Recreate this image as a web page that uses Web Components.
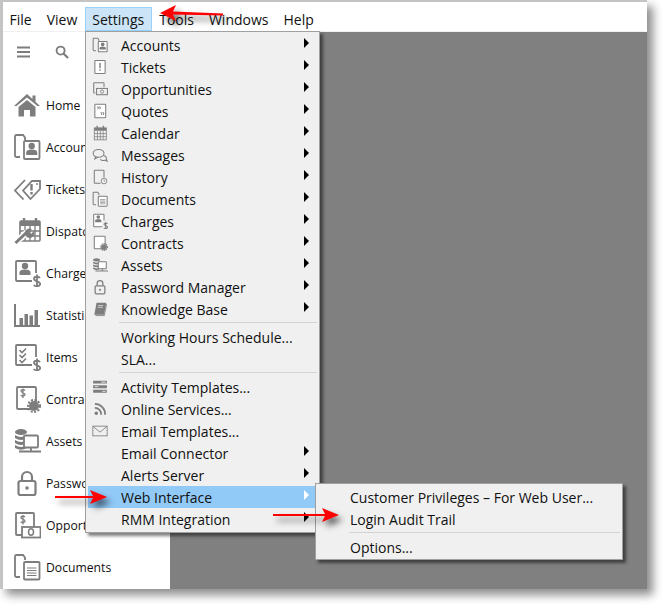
<!DOCTYPE html>
<html>
<head>
<meta charset="utf-8">
<title>Settings menu</title>
<style>
  html, body { margin: 0; background: #fff; }
  body { width: 663px; height: 605px; overflow: hidden; font-family: "Open Sans", "Noto Sans", sans-serif; }
</style>
</head>
<body>

<app-window>
  <menu-bar slot="bar">
    <bar-item>File</bar-item>
    <bar-item>View</bar-item>
    <bar-item active>Settings</bar-item>
    <bar-item>Tools</bar-item>
    <bar-item>Windows</bar-item>
    <bar-item>Help</bar-item>
  </menu-bar>

  <side-nav slot="side">
    <side-item icon="home">Home</side-item>
    <side-item icon="accounts">Accounts</side-item>
    <side-item icon="tag">Tickets</side-item>
    <side-item icon="dispatch">Dispatch</side-item>
    <side-item icon="charges">Charges</side-item>
    <side-item icon="stats">Statistics</side-item>
    <side-item icon="items">Items</side-item>
    <side-item icon="contracts">Contracts</side-item>
    <side-item icon="assets">Assets</side-item>
    <side-item icon="lock">Passwords</side-item>
    <side-item icon="opportunity">Opportunities</side-item>
    <side-item icon="documents">Documents</side-item>
  </side-nav>

  <pop-menu slot="over" style="left:85px;top:31px;width:229px">
    <menu-entry icon="accounts" more>Accounts</menu-entry>
    <menu-entry icon="ticket" more>Tickets</menu-entry>
    <menu-entry icon="bill" more>Opportunities</menu-entry>
    <menu-entry icon="quotes" more>Quotes</menu-entry>
    <menu-entry icon="calendar" more>Calendar</menu-entry>
    <menu-entry icon="messages" more>Messages</menu-entry>
    <menu-entry icon="history" more>History</menu-entry>
    <menu-entry icon="documents" more>Documents</menu-entry>
    <menu-entry icon="chargesmini" more>Charges</menu-entry>
    <menu-entry icon="contractmini" more>Contracts</menu-entry>
    <menu-entry icon="assets" more>Assets</menu-entry>
    <menu-entry icon="lock" more>Password Manager</menu-entry>
    <menu-entry icon="book" more>Knowledge Base</menu-entry>
    <menu-line></menu-line>
    <menu-entry>Working Hours Schedule...</menu-entry>
    <menu-entry>SLA...</menu-entry>
    <menu-line></menu-line>
    <menu-entry icon="activity">Activity Templates...</menu-entry>
    <menu-entry icon="rss">Online Services...</menu-entry>
    <menu-entry icon="mail">Email Templates...</menu-entry>
    <menu-entry more>Email Connector</menu-entry>
    <menu-entry more>Alerts Server</menu-entry>
    <menu-entry more selected>Web Interface</menu-entry>
    <menu-entry more>RMM Integration</menu-entry>
  </pop-menu>

  <pop-menu slot="over" style="left:315px;top:483px;width:302px;padding-bottom:1px">
    <menu-entry sub>Customer Privileges – For Web User...</menu-entry>
    <menu-entry sub>Login Audit Trail</menu-entry>
    <menu-line></menu-line>
    <menu-entry sub>Options...</menu-entry>
  </pop-menu>

  <red-arrow slot="over" dir="left" style="left:157px;top:2px;width:70px"></red-arrow>
  <red-arrow slot="over" style="left:52px;top:487px;width:58px"></red-arrow>
  <red-arrow slot="over" style="left:270px;top:505px;width:72px"></red-arrow>
</app-window>

<script>
  // icon shapes, all on a 28 x 28 box, drawn in currentColor
  const folderBack = '<path d="M7 24H3.500A1.500 1.500 0 0 1 2 22.500V3.500A1.500 1.500 0 0 1 3.500 2H10l2 2.500V7" fill="none" stroke="currentColor" stroke-width="1.800"/>'
  const dollar = '<path d="M27 19c-1-1.600-6-2-6 .8c0 3 6.200 2 6.200 5.200c0 2.800-5 2.600-6.500 1M24 15.500V29" fill="none" stroke="currentColor" stroke-width="1.800"/>'
  const gear = '<circle cx="21" cy="21" r="5" fill="currentColor"/><circle cx="21" cy="21" r="6" fill="none" stroke="currentColor" stroke-width="2" stroke-dasharray="2 1.500"/>'
  const bang = (x, y1, y2, d) => `<path d="M${x} ${y1}V${y2}M${x} ${d}V${d + 2.500}" stroke="currentColor" stroke-width="2.400" fill="none"/>`
  const person = (x, y) => `<circle cx="${x}" cy="${y}" r="3.200" fill="currentColor"/><path d="M${x - 5.500} ${y + 9}v-2.500q0-3 5.500-3q5.500 0 5.500 3v2.500z" fill="currentColor"/>`
  const card = (x, y, w, h) => `<rect x="${x}" y="${y}" width="${w}" height="${h}" rx="1" fill="#fff" stroke="currentColor" stroke-width="1.800"/>`
  const lines = (x, y, w, n, gap) => { let d = ''; for (let i = 0; i < n; i++) d += `M${x} ${y + i * gap}h${w}`; return `<path d="${d}" stroke="currentColor" stroke-width="1.200" fill="none"/>` }

  const ICONS = {
    home: '<path d="M14 3L1 15h2.500L14 6.500L24.500 15H27l-4.500-4.200V4.500h-3v3.500z" fill="currentColor"/><path d="M5.500 16L14 9l8.500 7v9.500H17V19h-6v6.500H5.500z" fill="currentColor"/>',
    accounts: folderBack + card(11, 8, 15.500, 18) + person(18.700, 13),
    documents: folderBack + card(11, 9, 15.500, 17.500) + lines(14, 15, 9.500, 4, 2.500),
    tag: '<path d="M10 15.500L19 6h8v8l-9.500 10z" fill="none" stroke="currentColor" stroke-width="1.800"/><path d="M12 5L2 15.500l8.500 9" fill="none" stroke="currentColor" stroke-width="1.800"/>' + bang(18.500, 9, 15.500, 17) + '<circle cx="24" cy="9" r="1" fill="currentColor"/>',
    ticket: card(5, 2.500, 18, 23) + bang(14, 7, 16, 18),
    dispatch: '<rect x="7" y="4" width="20" height="20" rx="1" fill="none" stroke="currentColor" stroke-width="1.600"/><rect x="7" y="4" width="20" height="5" fill="currentColor"/><path d="M7 14h20M7 19h20M12 9v15M17 9v15M22 9v15" stroke="currentColor" stroke-width="1.300"/><path d="M11 1v5M23 1v5" stroke="currentColor" stroke-width="2.400"/><path d="M2 26.500L14 15" stroke="#fff" stroke-width="6"/><path d="M2.500 26L13.500 15.500" stroke="currentColor" stroke-width="3"/><path d="M12 18a5 5 0 0 1 7-6l-3 3l2 2l3-3a5 5 0 0 1-6.500 6.500z" fill="currentColor"/>',
    charges: card(3, 2, 20, 20) + person(12, 7) + '<rect x="19" y="14" width="9" height="15" fill="#fff"/>' + dollar,
    chargesmini: card(3, 2, 18, 22) + person(11, 7) + '<rect x="18" y="13" width="10" height="15" fill="#f0f0f0"/>' + dollar,
    stats: '<path d="M2 3v22h25" fill="none" stroke="currentColor" stroke-width="2"/><rect x="6.500" y="17" width="3.500" height="7" fill="currentColor"/><rect x="11.500" y="13" width="3.500" height="11" fill="currentColor"/><rect x="16.500" y="14.500" width="3.500" height="9.500" fill="currentColor"/><rect x="21.500" y="9" width="3.500" height="15" fill="currentColor"/>',
    items: card(3, 2, 20, 20) + '<path d="M6.500 7l2.500 2.500l4-4M6.500 12l2.500 2.500l4-4M6.500 17l2.500 2.500l4-4" fill="none" stroke="currentColor" stroke-width="1.600"/><rect x="19" y="14" width="9" height="15" fill="#fff"/>' + dollar,
    contracts: card(4, 2, 19, 22) + '<path d="M12 5.500c-.8-1-4-1.300-4 .6c0 2 4 1.300 4 3.400c0 1.800-3.300 1.700-4.300.7M10 3.500V13" fill="none" stroke="currentColor" stroke-width="1.300"/>' + gear,
    contractmini: card(4, 2, 19, 22) + gear,
    assets: '<ellipse cx="8" cy="5" rx="6" ry="3" fill="currentColor"/><path d="M2 8q6 4 12 0v3q-6 4-12 0zM2 13q6 4 12 0v3q-6 4-12 0zM2 18q6 4 12 0v3q-6 3.500-12 0z" fill="currentColor"/><rect x="11" y="8.500" width="14" height="12" rx="1" fill="#fff" stroke="currentColor" stroke-width="1.800"/><path d="M6 24.500h22M18 20v4" stroke="currentColor" stroke-width="1.800"/>',
    lock: '<rect x="5.500" y="12" width="17" height="14" rx="2" fill="none" stroke="currentColor" stroke-width="2.200"/><path d="M9 12V8a5 5 0 0 1 10 0v4" fill="none" stroke="currentColor" stroke-width="2.200"/><circle cx="14" cy="19" r="1.800" fill="currentColor"/>',
    opportunity: card(3, 2, 18, 22) + '<path d="M12 6c-.8-1-4-1.300-4 .6c0 2 4 1.300 4 3.400c0 1.800-3.300 1.700-4.300.7M10 4v9.500" fill="none" stroke="currentColor" stroke-width="1.300"/><rect x="9" y="16" width="18.500" height="10.500" fill="#fff" stroke="currentColor" stroke-width="1.800"/><ellipse cx="18" cy="21" rx="2.500" ry="3.200" fill="none" stroke="currentColor" stroke-width="1.500"/>',
    bill: '<path d="M6 21H4a1 1 0 0 1-1-1V4a1 1 0 0 1 1-1h16a1 1 0 0 1 1 1v7" fill="none" stroke="currentColor" stroke-width="1.800"/><rect x="8" y="13" width="19" height="11" fill="none" stroke="currentColor" stroke-width="1.800"/><circle cx="17.500" cy="18.500" r="2.800" fill="none" stroke="currentColor" stroke-width="1.500"/>',
    quotes: card(5, 2, 19, 24) + '<path d="M9 7h2v2l-1 2M12.500 7h2v2l-1 2M15 17h2v2l-1 2M18.500 17h2v2l-1 2" fill="none" stroke="currentColor" stroke-width="1.700"/>',
    calendar: '<rect x="4" y="5" width="21" height="21" fill="none" stroke="currentColor" stroke-width="1.400"/><rect x="4" y="5" width="21" height="5" fill="currentColor"/><path d="M4 15h21M4 20.500h21M9.500 10v16M14.500 10v16M19.500 10v16" stroke="currentColor" stroke-width="1.300"/><path d="M9 1.500v6M20 1.500v6" stroke="currentColor" stroke-width="2.400"/>',
    messages: '<ellipse cx="11.500" cy="11" rx="9.500" ry="6.800" fill="none" stroke="currentColor" stroke-width="1.800"/><path d="M20 15c4 1 6 3 5 6l1.500 4l-4-2c-3 1-6 .5-8-1.500M6 16.500L5 21l5-3" fill="none" stroke="currentColor" stroke-width="1.800"/>',
    history: '<path d="M15 25H5a1 1 0 0 1-1-1V3a1 1 0 0 1 1-1h15a1 1 0 0 1 1 1v12" fill="none" stroke="currentColor" stroke-width="1.800"/><circle cx="21" cy="21" r="5" fill="none" stroke="currentColor" stroke-width="1.500"/><path d="M21 18.500V21h2" fill="none" stroke="currentColor" stroke-width="1.200"/>',
    book: '<path d="M8 3h17l-4 21H4z" fill="currentColor"/><path d="M6 25.500h15.500l4-20" fill="none" stroke="currentColor" stroke-width="1.500"/><path d="M10.500 8h9M10 11h9" stroke="#f0f0f0" stroke-width="1.200"/>',
    activity: '<path d="M2 3h24v5H2zM2 11h24v5H2zM2 19h24v5H2z" fill="currentColor"/><path d="M16 5.500h8M5 13.500h6M18 21.500h6" stroke="#f0f0f0" stroke-width="1.500"/>',
    rss: '<circle cx="7.500" cy="21.500" r="3" fill="currentColor"/><path d="M5 12a11 11 0 0 1 11 12M5 5a18 18 0 0 1 18 19" fill="none" stroke="currentColor" stroke-width="3"/>',
    mail: '<rect x="1.500" y="5.500" width="25" height="17" fill="none" stroke="currentColor" stroke-width="1.500"/><path d="M2 6l12 10l12-10" fill="none" stroke="currentColor" stroke-width="1.500"/>'
  }

  class AppIcon extends HTMLElement {
    connectedCallback() {
      const size = this.getAttribute('size') || 16
      this.attachShadow({ mode: 'open' })
      this.shadowRoot.innerHTML = `
        <style>
          :host { display: block; flex: none; width: ${size}px; height: ${size}px; color: #7d7d7d; }
          svg { display: block; }
        </style>
        <svg width="${size}" height="${size}" viewBox="0 0 28 28">${ICONS[this.getAttribute('name')] || ''}</svg>`
    }
  }

  class AppWindow extends HTMLElement {
    connectedCallback() {
      this.attachShadow({ mode: 'open' })
      this.shadowRoot.innerHTML = `
        <style>
          :host {
            display: flex;
            flex-direction: column;
            position: relative;
            box-sizing: border-box;
            width: 647px;
            height: 589px;
            border-top: 2px solid #c4c4c4;
            border-left: 3px solid #c4c4c4;
            background: #fff;
            box-shadow: 6px 6px 9px rgba(0, 0, 0, .45);
          }
          .body { display: flex; flex: 1; min-height: 0; border-top: 1px solid #f0f0f0; }
          .work { flex: 1; background: #808080; }
          .over { position: absolute; left: -3px; top: -2px; width: 0; height: 0; }
        </style>
        <slot name="bar"></slot>
        <div class="body">
          <slot name="side"></slot>
          <div class="work"></div>
        </div>
        <div class="over"><slot name="over"></slot></div>`
    }
  }

  class MenuBar extends HTMLElement {
    connectedCallback() {
      this.attachShadow({ mode: 'open' })
      this.shadowRoot.innerHTML = `
        <style>
          :host {
            display: flex;
            align-items: flex-end;
            flex: none;
            height: 29px;
            margin-left: -1px;
            color: #111;
            font: 14px "Open Sans", "Noto Sans", sans-serif;
          }
        </style>
        <slot></slot>`
    }
  }

  class BarItem extends HTMLElement {
    connectedCallback() {
      this.attachShadow({ mode: 'open' })
      this.shadowRoot.innerHTML = `
        <style>
          :host {
            display: block;
            box-sizing: border-box;
            height: 24px;
            line-height: 23px;
            padding: 0 6.500px;
            border: 1px solid transparent;
          }
          :host([active]) { background: #cce4f7; border-color: #99d1ff; }
        </style>
        <slot></slot>`
    }
  }

  class SideNav extends HTMLElement {
    connectedCallback() {
      this.attachShadow({ mode: 'open' })
      this.shadowRoot.innerHTML = `
        <style>
          :host {
            display: block;
            flex: none;
            box-sizing: border-box;
            width: 167px;
            height: 100%;
            overflow: hidden;
            background: #fff;
          }
          .tools { display: flex; align-items: center; gap: 25px; height: 52px; padding: 0 0 13px 14px; box-sizing: border-box; color: #7d7d7d; }
          svg { display: block; }
        </style>
        <div class="tools">
          <svg width="13" height="12" viewBox="0 0 13 12"><path d="M0 1.500h13M0 6h13M0 10.500h13" stroke="currentColor" stroke-width="2"/></svg>
          <svg width="14" height="14" viewBox="0 0 15 15"><circle cx="6" cy="6" r="4.300" fill="none" stroke="currentColor" stroke-width="2"/><path d="M9.300 9.300L14 14" stroke="currentColor" stroke-width="2.400"/></svg>
        </div>
        <slot></slot>`
    }
  }

  class SideItem extends HTMLElement {
    connectedCallback() {
      this.attachShadow({ mode: 'open' })
      this.shadowRoot.innerHTML = `
        <style>
          :host {
            display: flex;
            align-items: center;
            gap: 5px;
            height: 42px;
            padding-left: 10px;
            color: #111;
            font: 12.200px "Open Sans", "Noto Sans", sans-serif;
            white-space: nowrap;
          }
        </style>
        <app-icon name="${this.getAttribute('icon')}" size="28"></app-icon>
        <slot></slot>`
    }
  }

  class PopMenu extends HTMLElement {
    connectedCallback() {
      this.attachShadow({ mode: 'open' })
      this.shadowRoot.innerHTML = `
        <style>
          :host {
            display: block;
            position: absolute;
            padding: 2px;
            background: #f0f0f0;
            border: 1px solid #a0a0a0;
            box-shadow: 3px 3px 3px rgba(0, 0, 0, .5);
            color: #111;
            font: 14px "Open Sans", "Noto Sans", sans-serif;
          }
        </style>
        <slot></slot>`
    }
  }

  class MenuEntry extends HTMLElement {
    connectedCallback() {
      const icon = this.getAttribute('icon')
      const more = this.hasAttribute('more')
      this.attachShadow({ mode: 'open' })
      this.shadowRoot.innerHTML = `
        <style>
          :host {
            display: flex;
            align-items: center;
            height: 22px;
            white-space: nowrap;
          }
          :host([selected]) { background: #91c9f7; --chevron: #fff; }
          .gutter { flex: none; box-sizing: border-box; width: 33px; padding-left: 4px; }
          :host([sub]) .gutter { width: 32px; }
          .label { flex: 1; }
          .chevron {
            flex: none;
            width: 0;
            height: 0;
            margin: 0 8px 5px 0;
            border-left: 5px solid var(--chevron, #000);
            border-top: 5px solid transparent;
            border-bottom: 5px solid transparent;
          }
        </style>
        <div class="gutter">${icon ? `<app-icon name="${icon}"></app-icon>` : ''}</div>
        <div class="label"><slot></slot></div>
        ${more ? '<div class="chevron"></div>' : ''}`
    }
  }

  class MenuLine extends HTMLElement {
    connectedCallback() {
      this.attachShadow({ mode: 'open' })
      this.shadowRoot.innerHTML = `
        <style>
          :host { display: block; height: 6px; box-sizing: border-box; padding: 2px 0 0 31px; }
          div { height: 1px; background: #d3d3d3; }
        </style>
        <div></div>`
    }
  }

  class RedArrow extends HTMLElement {
    connectedCallback() {
      const w = parseInt(this.style.width)
      const left = this.getAttribute('dir') === 'left'
      const shape = left
        ? `M3 11L19 3L16 9.500L${w - 4} 11.500V13.500L16 12.500L19 19z`
        : `M3 9H${w - 17}L${w - 20} 3L${w - 3} 10L${w - 20} 17L${w - 17} 11H3z`
      this.attachShadow({ mode: 'open' })
      this.shadowRoot.innerHTML = `
        <style>
          :host { display: block; position: absolute; height: 24px; }
          svg { display: block; overflow: visible; filter: drop-shadow(4px 5px 3px rgba(0, 0, 0, .6)); }
        </style>
        <svg width="${w}" height="24" viewBox="0 0 ${w} 24"><path d="${shape}" fill="#f00"/></svg>`
    }
  }

  customElements.define('app-icon', AppIcon)
  customElements.define('app-window', AppWindow)
  customElements.define('menu-bar', MenuBar)
  customElements.define('bar-item', BarItem)
  customElements.define('side-nav', SideNav)
  customElements.define('side-item', SideItem)
  customElements.define('pop-menu', PopMenu)
  customElements.define('menu-entry', MenuEntry)
  customElements.define('menu-line', MenuLine)
  customElements.define('red-arrow', RedArrow)
</script>
</body>
</html>
